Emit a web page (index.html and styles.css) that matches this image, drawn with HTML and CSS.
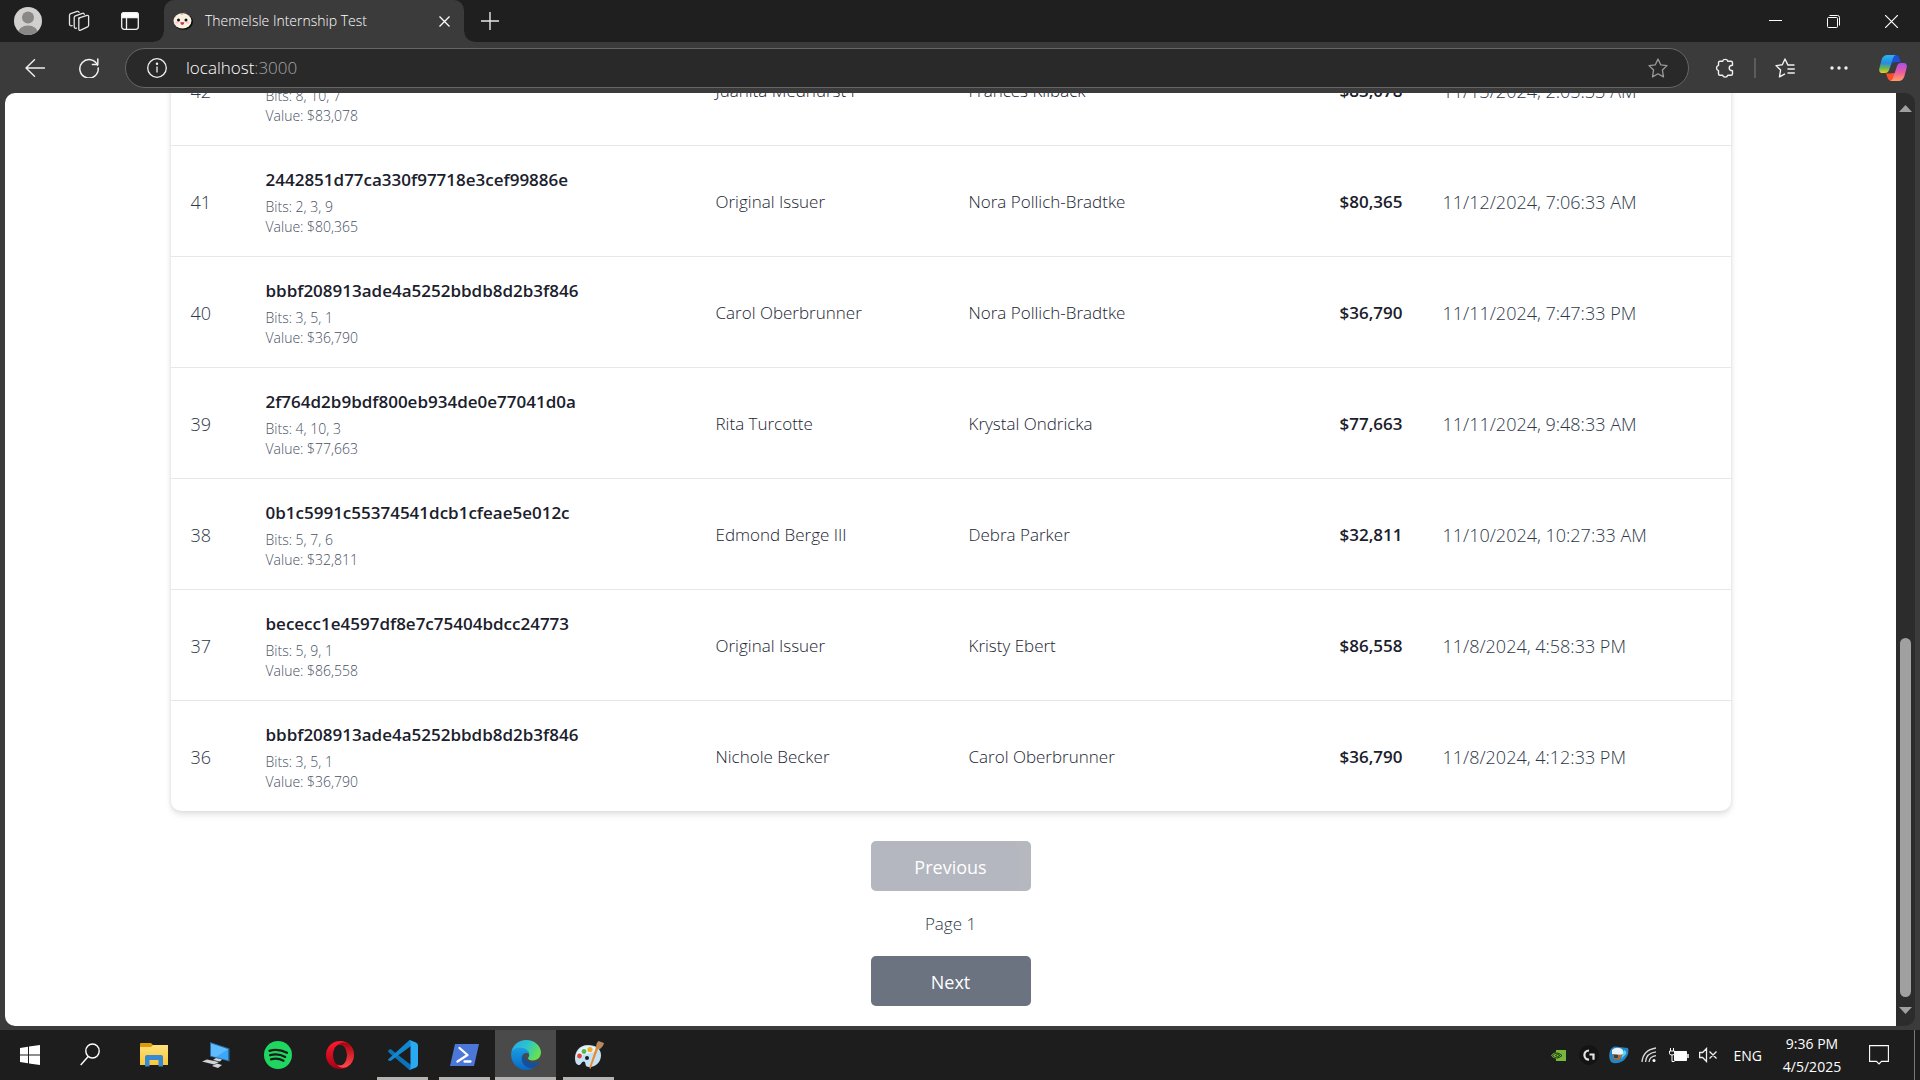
FILE: index.html
```html
<!DOCTYPE html>
<html lang="en">
<head>
<meta charset="utf-8">
<title>ThemeIsle Internship Test</title>
<link rel="stylesheet" href="styles.css">
</head>
<body>
<header class="tabstrip">
  <div class="strip-tools">
    <button class="strip-btn" aria-label="Profile">
      <svg width="28" height="28" viewBox="0 0 28 28"><defs><clipPath id="face"><circle cx="14" cy="14" r="14"/></clipPath></defs><g clip-path="url(#face)"><rect width="28" height="28" fill="#d2d0ce"/><circle cx="14" cy="10.5" r="6" fill="#8a8886"/><ellipse cx="14" cy="26" rx="10" ry="7.5" fill="#8a8886"/></g></svg>
    </button>
    <button class="strip-btn" aria-label="Workspaces">
      <svg width="22" height="22" viewBox="0 0 22 22" fill="none" stroke="#e6e6e6" stroke-width="1.3" stroke-linejoin="round" stroke-linecap="round"><path d="M10.5 8.2 19 5.4q1.6-.4 1.6 1.2v8.6q0 1.200-1 1.600l-7 3.400q-1.800.7-1.800-1.200V9.500q0-1 .900-1.300z"/><path d="M8.500 18.200q-2.300.6-2.300-1.700V7.500q0-1.300 1.200-1.700l7-2.500q1.500-.4 1.900 1"/><path d="M4.200 15.700q-2.700.5-2.700-1.700V5.400q0-1.300 1.200-1.700l6.500-2.300q1.500-.4 1.900 1"/></svg>
    </button>
    <button class="strip-btn" aria-label="Tab actions">
      <svg width="18" height="18" viewBox="0 0 18 18" fill="none" stroke="#f0f0f0" stroke-width="1.3"><rect x=".7" y=".7" width="16.600" height="16.600" rx="2.500"/><path d="M.7 5.500V3Q.7.7 3 .7h12q2.300 0 2.300 2.300v2.500z" fill="#fff"/><path d="M5.500 5.500v11.800"/></svg>
    </button>
  </div>
  <div class="tab">
    <svg class="tab-icon" width="20" height="18" viewBox="0 0 20 18"><ellipse cx="10.500" cy="9.800" rx="9.500" ry="8" fill="#0b0b0b"/><ellipse cx="9.500" cy="8.800" rx="9" ry="7.600" fill="#fbf0df"/><path d="M8 2.500q2.500 0 3-1.800" stroke="#c9b59a" fill="none"/><circle cx="5.500" cy="8" r="1.500" fill="#111"/><circle cx="13" cy="8" r="1.500" fill="#111"/><ellipse cx="3.800" cy="10.500" rx="1.500" ry=".9" fill="#febbd0"/><ellipse cx="14.700" cy="10.500" rx="1.500" ry=".9" fill="#febbd0"/><path d="M7.200 10.300h4.200q-.4 2.600-2.100 2.600t-2.100-2.600z" fill="#c6303f"/></svg>
    <span class="tab-title">ThemeIsle Internship Test</span>
    <button class="tab-close" aria-label="Close tab"><svg width="11" height="11" viewBox="0 0 11 11" stroke="#fff" stroke-width="1.300"><path d="m.5.5 10 10m0-10-10 10"/></svg></button>
  </div>
  <button class="new-tab" aria-label="New tab"><svg width="18" height="18" viewBox="0 0 18 18" stroke="#e8e8e8" stroke-width="1.400"><path d="M9 0v18M0 9h18"/></svg></button>
  <div class="window-controls">
    <button class="win-btn" aria-label="Minimize"><svg width="13" height="13" viewBox="0 0 13 13" stroke="#fff"><path d="M0 5.500h13"/></svg></button>
    <button class="win-btn" aria-label="Restore"><svg width="13" height="13" viewBox="0 0 13 13" fill="none" stroke="#fff"><rect x=".5" y="2.500" width="10" height="10" rx="1"/><path d="M2.500.5h8q2 0 2 2v8"/></svg></button>
    <button class="win-btn" aria-label="Close"><svg width="13" height="13" viewBox="0 0 13 13" stroke="#fff" stroke-width="1.200"><path d="m0 0 13 13M13 0 0 13"/></svg></button>
  </div>
</header>

<nav class="toolbar" aria-label="Browser">
  <button class="tool-btn" aria-label="Back"><svg width="20" height="18" viewBox="0 0 20 18" fill="none" stroke="#f0f0f0" stroke-width="1.400" stroke-linecap="round" stroke-linejoin="round"><path d="M9.500.7 1 9l8.500 8.300M1 9h18.500"/></svg></button>
  <button class="tool-btn" aria-label="Refresh"><svg width="20" height="20" viewBox="0 0 20 20" fill="none" stroke="#f0f0f0" stroke-width="1.500" stroke-linecap="round" stroke-linejoin="round"><path d="M18.500 7.200A9.200 9.200 0 1 0 19.200 10"/><path d="M18.800 1v5.400h-5.400"/></svg></button>
  <div class="address">
    <svg width="20" height="20" viewBox="0 0 20 20" fill="none" stroke="#f0f0f0" stroke-width="1.300"><circle cx="10" cy="10" r="9.300"/><path d="M10 8.500v6"/><circle cx="10" cy="5.800" r=".6" fill="#fff"/></svg>
    <span class="url">localhost<span class="port">:3000</span></span>
    <button class="favorite" aria-label="Add to favorites"><svg width="20" height="20" viewBox="0 0 20 20" fill="none" stroke="#9a9a9a" stroke-width="1.300" stroke-linejoin="round"><path d="m10 1 2.700 5.800 6.300.8-4.600 4.400 1.100 6.900L10 15.800 4.500 18.900 5.600 12 1 7.600l6.300-.8z"/></svg></button>
  </div>
  <button class="tool-btn" aria-label="Extensions"><svg width="20" height="20" viewBox="0 0 20 20" fill="none" stroke="#f0f0f0" stroke-width="1.400" stroke-linejoin="round"><path d="M5 3.300h2.600a2.700 2.700 0 0 1 5.200 0h3.200q1.500 0 1.500 1.500v2.400q-3.300.2-3.300 2.800t3.300 2.800v2.900q0 1.500-1.500 1.500h-3.200a2.700 2.700 0 0 1-5.200 0H5q-1.500 0-1.500-1.500v-3.100a2.700 2.700 0 0 1 0-5.200V4.800q0-1.500 1.500-1.500z"/></svg></button>
  <span class="divider"></span>
  <button class="tool-btn" aria-label="Favorites"><svg width="20" height="20" viewBox="0 0 20 20" fill="none" stroke="#f0f0f0" stroke-width="1.400" stroke-linejoin="round" stroke-linecap="round"><path d="M12.800 6.900 10 1 7.300 6.800 1 7.600 5.600 12 4.500 18.900l5-2.800M13 11H19.300M13 15H19.300M12.800 7H19"/></svg></button>
  <button class="tool-btn" aria-label="Settings and more"><svg width="18" height="4" viewBox="0 0 18 4" fill="#f0f0f0"><circle cx="2" cy="2" r="1.700"/><circle cx="9" cy="2" r="1.700"/><circle cx="16" cy="2" r="1.700"/></svg></button>
  <button class="tool-btn" aria-label="Copilot"><svg width="28" height="26" viewBox="0 0 28 26"><defs><linearGradient id="cpA" x1="0" y1="0" x2="0" y2="1"><stop offset="0" stop-color="#28b5f4"/><stop offset=".45" stop-color="#2a8bdc"/><stop offset=".75" stop-color="#6cba4a"/><stop offset="1" stop-color="#f2cf1c"/></linearGradient><linearGradient id="cpB" x1="0" y1="0" x2="0" y2="1"><stop offset="0" stop-color="#a450f0"/><stop offset=".5" stop-color="#ec5aa0"/><stop offset="1" stop-color="#ffa060"/></linearGradient></defs><path d="M8 0h9q2.500 0 3.300 2.800L21.500 7H17l-4 1-3 8z" fill="#1c50d8"/><path d="M8.500 0H17q-2 0-3 3l-4 12q-1 3-4 3H3.500Q-.5 18 .3 13.500L2.500 5Q4 0 8.500 0z" fill="url(#cpA)"/><path d="M7 18.500h4l5-.5 2-2-2 8-1.500 2H12q-2.500 0-3.300-2.800z" fill="#f8502c"/><path d="M19.500 26H11q2 0 3-3l4-12q1-3 4-3h2.500q4 0 3.200 4.500L25.500 21q-1.500 5-6 5z" fill="url(#cpB)"/></svg></button>
</nav>

<div class="window">
  <div class="viewport">
    <main class="page">
      <div class="card">
        <table class="sales">
          <colgroup><col class="c-id"><col class="c-hash"><col class="c-from"><col class="c-to"><col class="c-amount"><col class="c-date"></colgroup>
          <tbody>
            <tr><td class="id">42</td><td><strong class="hash">&nbsp;</strong><span class="meta">Bits: 8, 10, 7</span><span class="meta">Value: $83,078</span></td><td>Juanita Medhurst I</td><td>Frances Kilback</td><td class="amount">$83,078</td><td class="date">11/13/2024, 2:05:33 AM</td></tr>
            <tr><td class="id">41</td><td><strong class="hash">2442851d77ca330f97718e3cef99886e</strong><span class="meta">Bits: 2, 3, 9</span><span class="meta">Value: $80,365</span></td><td>Original Issuer</td><td>Nora Pollich-Bradtke</td><td class="amount">$80,365</td><td class="date">11/12/2024, 7:06:33 AM</td></tr>
            <tr><td class="id">40</td><td><strong class="hash">bbbf208913ade4a5252bbdb8d2b3f846</strong><span class="meta">Bits: 3, 5, 1</span><span class="meta">Value: $36,790</span></td><td>Carol Oberbrunner</td><td>Nora Pollich-Bradtke</td><td class="amount">$36,790</td><td class="date">11/11/2024, 7:47:33 PM</td></tr>
            <tr><td class="id">39</td><td><strong class="hash">2f764d2b9bdf800eb934de0e77041d0a</strong><span class="meta">Bits: 4, 10, 3</span><span class="meta">Value: $77,663</span></td><td>Rita Turcotte</td><td>Krystal Ondricka</td><td class="amount">$77,663</td><td class="date">11/11/2024, 9:48:33 AM</td></tr>
            <tr><td class="id">38</td><td><strong class="hash">0b1c5991c55374541dcb1cfeae5e012c</strong><span class="meta">Bits: 5, 7, 6</span><span class="meta">Value: $32,811</span></td><td>Edmond Berge III</td><td>Debra Parker</td><td class="amount">$32,811</td><td class="date">11/10/2024, 10:27:33 AM</td></tr>
            <tr><td class="id">37</td><td><strong class="hash">bececc1e4597df8e7c75404bdcc24773</strong><span class="meta">Bits: 5, 9, 1</span><span class="meta">Value: $86,558</span></td><td>Original Issuer</td><td>Kristy Ebert</td><td class="amount">$86,558</td><td class="date">11/8/2024, 4:58:33 PM</td></tr>
            <tr><td class="id">36</td><td><strong class="hash">bbbf208913ade4a5252bbdb8d2b3f846</strong><span class="meta">Bits: 3, 5, 1</span><span class="meta">Value: $36,790</span></td><td>Nichole Becker</td><td>Carol Oberbrunner</td><td class="amount">$36,790</td><td class="date">11/8/2024, 4:12:33 PM</td></tr>
          </tbody>
        </table>
      </div>
      <div class="pagination">
        <button class="page-btn" disabled>Previous</button>
        <span class="page-label">Page 1</span>
        <button class="page-btn">Next</button>
      </div>
    </main>
    <div class="scrollbar" aria-hidden="true">
      <svg width="13" height="7" viewBox="0 0 13 7"><path d="M6.500 0 13 7H0z" fill="#a0a0a0"/></svg>
      <div class="track"><div class="thumb"></div></div>
      <svg width="13" height="7" viewBox="0 0 13 7"><path d="M6.500 7 13 0H0z" fill="#a0a0a0"/></svg>
    </div>
  </div>
</div>

<footer class="taskbar">
  <button class="task sys" aria-label="Start"><svg width="20" height="20" viewBox="0 0 20 20" fill="#fff"><path d="M0 3l8-1.200v7.700H0zM9 1.600 20 0v9.500H9zM0 10.500h8v7.700L0 17zM9 10.500h11V20L9 18.400z"/></svg></button>
  <button class="task sys" aria-label="Search"><svg width="20" height="24" viewBox="0 0 20 24" fill="none" stroke="#fff" stroke-width="1.400"><ellipse cx="12.500" cy="8" rx="6.700" ry="7"/><path d="M8.200 13.500.7 22"/></svg></button>
  <button class="task first" aria-label="File Explorer"><svg width="28" height="24" viewBox="0 0 28 24"><defs><linearGradient id="fe" x1="0" y1="0" x2="0" y2="1"><stop offset="0" stop-color="#ffe07a"/><stop offset="1" stop-color="#fac738"/></linearGradient></defs><path d="M0 1q0-1 1-1h10l2 2h14q1 0 1 1v10H0z" fill="#dd9b05"/><path d="M0 4h11l2-2h15v20H0z" fill="url(#fe)"/><path d="M5 23.500V14q0-2 2-2h14q2 0 2 2v9.500h-4.500V17h-9v6.500z" fill="#3689d3"/></svg></button>
  <button class="task" aria-label="This PC"><svg width="28" height="26" viewBox="0 0 28 26"><path d="m8 0 19.500 6.500v13L8 14.500z" fill="#2f6c9c"/><path d="m9 1.500 17 5.800v11L9 13.700z" fill="#3ba7f8"/><path d="m9 1.500 17 5.800-12 7.700-5-1.300z" fill="#5fbcff"/><path d="m0 19.500 5-2 12 2.500-5 2.500zM10 24l5-2.500 5 1.500-4 3zM14 16l6 1.500-2 2-7-1.500z" fill="#cfd3da"/></svg></button>
  <button class="task" aria-label="Spotify"><svg width="28" height="28" viewBox="0 0 28 28"><circle cx="14" cy="14" r="14" fill="#1fd760"/><path d="M5.500 9.800q9-2.500 17.500 2M6.200 14.200q7.800-2.200 15 1.700M7 18.300q6.800-1.700 12.500 1.500" fill="none" stroke="#1b1b1b" stroke-width="2.300" stroke-linecap="round"/></svg></button>
  <button class="task" aria-label="Opera"><svg width="28" height="28" viewBox="0 0 28 28"><defs><linearGradient id="op" x1="0" y1="0" x2="0" y2="1"><stop offset="0" stop-color="#ff1b2d"/><stop offset="1" stop-color="#a70014"/></linearGradient><linearGradient id="op2" x1="0" y1="0" x2="0" y2="1"><stop offset="0" stop-color="#a80010"/><stop offset="1" stop-color="#ff4b4b"/></linearGradient></defs><path fill-rule="evenodd" d="M14 0a14 14 0 1 0 0 28 14 14 0 0 0 0-28zm0 3.500c4 0 7 4.700 7 10.500s-3 10.500-7 10.500S7 19.800 7 14s3-10.500 7-10.500z" fill="url(#op)"/><path d="M11 4.500C14 .5 20 .5 23.300 3.600A14 14 0 0 1 23 24.600c-4 3.200-9 3-12-1.100 5 3 10-1.500 10-9.500S16 1.500 11 4.500z" fill="url(#op2)"/></svg></button>
  <button class="task open" aria-label="Visual Studio Code"><svg width="30" height="30" viewBox="0 0 30 30"><path d="M0 10.500 2.500 9 23 25v4.500L21.500 30 .3 12z" fill="#0b73b8"/><path d="M0 19.500 21.500 0l1.500.5V6L2.500 21 .3 20.500z" fill="#1286cf"/><path d="M21.500 0 28 2.500q2 .8 2 3v19q0 2.200-2 3L21.500 30q1-.5 1-2V2q0-1.500-1-2z" fill="#29a9f2"/></svg></button>
  <button class="task open" aria-label="PowerShell"><svg width="29" height="22" viewBox="0 0 29 22"><path d="M5 0h24l-5 22H0z" fill="#4b78d8"/><path d="m9.500 4 8 7-10 6.500M14.500 17.500h6" fill="none" stroke="#fff" stroke-width="2.300" stroke-linecap="round" stroke-linejoin="round"/></svg></button>
  <button class="task open active" aria-label="Microsoft Edge"><svg width="30" height="30" viewBox="0 0 30 30"><defs><linearGradient id="ed" x1="0" y1="0" x2="1" y2=".4"><stop offset="0" stop-color="#2aa5e8"/><stop offset=".55" stop-color="#2cc4cf"/><stop offset="1" stop-color="#63e055"/></linearGradient><linearGradient id="ed2" x1="0" y1="0" x2="0" y2="1"><stop offset="0" stop-color="#1b9de2"/><stop offset="1" stop-color="#0669c8"/></linearGradient></defs><path d="M.3 12.500C1.500 5 7.500 0 15 0c9 0 15 6.200 15 12.500 0 5-4 8-8.500 8-3 0-4.500-1-4.500-2.200 0-.8 1.200-1.300 1.200-3.600 0-3.500-4-6.200-8-6.200-5 0-9 2-9.900 4z" fill="url(#ed)"/><path d="M.2 13C1 9.500 5 7.800 9.500 7.800c5 0 8.700 3 8.700 6.700-2-3-7.500-1-7.500 4 0 6 5 10 11 9.700C19 29.700 17 30 15 30 6 30-.8 22 .2 13z" fill="url(#ed2)"/><path d="M12.500 14.500c-4 7 2 14.500 9 13.800 3-1.300 5.500-3.800 6.500-5.800.3-.7-.2-1-.9-.6-6 2.800-12.600.1-14.600-7.400z" fill="#1450a0"/></svg></button>
  <button class="task open" aria-label="Paint"><svg width="30" height="28" viewBox="0 0 30 28"><path d="M14 4C5 4 1 11 1 17c0 5 2 7 4 7s3-4 5-3.500c2.500.5 0 5.500 5 5.500 8 0 12-6 12-12S22 4 14 4z" fill="#c5e2f3"/><path d="M14 5C7 5 3 10 2 15q11-1 23-6Q21 5 14 5z" fill="#e6f4fb"/><circle cx="5.500" cy="15" r="2.400" fill="#e0453c"/><circle cx="10" cy="10.500" r="2.400" fill="#58b947"/><circle cx="16" cy="8.500" r="2.600" fill="#f5ac28"/><circle cx="13" cy="17" r="2" fill="#17202a"/><path d="m22 6 2.500 1-8 21q-1.500-.5-1-2z" fill="#ea8b32"/><path d="M22 7q0-5 2.500-7l5.500 2q-1 4-5 6.500z" fill="#b98a5c"/></svg></button>

  <div class="tray">
    <span class="tray-item"><svg width="15" height="11" viewBox="0 0 15 11"><path d="M5 0h10v11H5z" fill="#76b93a"/><path d="M0 5.500Q5-1 12 5.500 5 12 0 5.500z" fill="#76b93a"/><path d="M1.500 5.500Q6 .5 11 5.500 6 10.500 1.500 5.500zM4.500 5.500Q6.500 3 9 5.500 6.500 8 4.500 5.500z" fill="none" stroke="#1d2a12" stroke-width=".9"/></svg></span>
    <span class="tray-item"><svg width="20" height="20" viewBox="0 0 20 20"><circle cx="10" cy="10" r="10" fill="#141414"/><path d="M10 5.500a4.600 4.600 0 0 0 0 9.200M10.500 9.500h4v5.200" fill="none" stroke="#e6e6e6" stroke-width="2.200"/></svg></span>
    <span class="tray-item"><svg width="20" height="18" viewBox="0 0 20 18"><path d="M1 5Q3-1 10 1l9 1q2 7-5 13-7 4-12 1Q-1 12 1 5z" fill="#2285c4"/><path d="M3 4q4-4 10-1l3 5-6 1-7-1z" fill="#e8f4fa"/><path d="M4 8l9 1-3 5-6-1z" fill="#bb6a28"/><path d="M5 9h4v3H5z" fill="#25485c"/><path d="M15 4q3 1 2 4l-5 5z" fill="#62cdf0"/></svg></span>
    <span class="tray-item"><svg width="16" height="16" viewBox="0 0 16 16" fill="none" stroke="#d8d8d8" stroke-width="1.300"><path d="M1 15Q2 3 15 1M4.500 15Q5 6 15 4.800M8 15q.5-5.500 7-6.300"/><circle cx="13" cy="13.500" r="1.500" fill="#fff" stroke="none"/></svg></span>
    <span class="tray-item"><svg width="20" height="14" viewBox="0 0 20 14"><path d="M5.500 3.500h12v9h-12z" fill="#fff" stroke="#fff"/><path d="M19 6v4" stroke="#fff" stroke-width="1.500"/><path d="M.5 3h5v2.500q0 1.500-2.500 1.500T.5 5.500zM1.500 0v3M4.500 0v3M3 7v6.500h2.500" fill="#1e1c1c" stroke="#fff"/></svg></span>
    <span class="tray-item"><svg width="19" height="16" viewBox="0 0 19 16" fill="none" stroke="#f0f0f0" stroke-width="1.300"><path d="M.6 5.500h3L7.500 1.500v13l-3.900-4h-3zM10.500 4.500l7 7m0-7-7 7"/></svg></span>
    <span class="lang">ENG</span>
    <time class="clock"><span>9:36 PM</span><span>4/5/2025</span></time>
    <button class="notify" aria-label="Notifications"><svg width="20" height="20" viewBox="0 0 20 20" fill="none" stroke="#fff" stroke-width="1.100"><path d="M.6.6h18.800v15.800h-6.900L10 19l-2.500-2.600H.6z"/></svg></button>
    <span class="show-desktop"></span>
  </div>
</footer>
</body>
</html>
```
FILE: styles.css
```css
* { box-sizing: border-box; }

body {
  margin: 0;
  height: 100vh;
  display: flex;
  flex-direction: column;
  overflow: hidden;
  background: #3b3b3b;
  font-family: "Open Sans", "Noto Sans", sans-serif;
  font-weight: 300;
  font-size: 17px;
}

button {
  padding: 0;
  border: 0;
  background: none;
  color: inherit;
  font: inherit;
  display: flex;
  align-items: center;
  justify-content: center;
}

svg { display: block; flex: none; }

/* Tab strip */
.tabstrip { height: 42px; flex: none; display: flex; background: #1f1f1f; }
.strip-tools { display: flex; gap: 1px; padding: 0 9px 0 3px; }
.strip-btn { width: 50px; }
.tab {
  position: relative;
  width: 300px;
  display: flex;
  align-items: center;
  padding: 0 8px 0 9px;
  background: #3b3b3b;
  border-radius: 10px 10px 0 0;
  color: #fff;
}
.tab::before,
.tab::after {
  content: "";
  position: absolute;
  bottom: 0;
  width: 10px;
  height: 10px;
}
.tab::before { left: -10px; background: radial-gradient(circle at 0 0, #1f1f1f 9px, #3b3b3b 10px); }
.tab::after { right: -10px; background: radial-gradient(circle at 100% 0, #1f1f1f 9px, #3b3b3b 10px); }
.tab-title { flex: 1; padding-left: 12px; font-size: 14px; line-height: 20px; }
.tab-close { width: 24px; height: 24px; }
.new-tab { width: 52px; }
.window-controls { display: flex; margin-left: auto; }
.win-btn { width: 58px; }

/* Toolbar */
.toolbar { height: 51px; flex: none; display: flex; align-items: center; padding: 1px 0 0 8px; background: #3b3b3b; }
.tool-btn { width: 54px; height: 40px; }
.address {
  flex: 1;
  height: 40px;
  display: flex;
  align-items: center;
  margin: 0 9px;
  padding: 0 20px 0 21px;
  background: #292929;
  border: 1px solid #666;
  border-radius: 20px;
}
.url { flex: 1; padding-left: 19px; color: #fff; line-height: 24px; }
.port { color: #a6a6a6; }
.divider { width: 2px; height: 20px; margin: 0 2px; background: #5c5c5c; }

/* Page area */
.window { flex: 1; min-height: 0; display: flex; padding: 0 5px 4px; }
.viewport { flex: 1; display: flex; border-radius: 10px; overflow: hidden; background: #2c2c2c; }
.page {
  flex: 1;
  min-width: 0;
  display: flex;
  flex-direction: column;
  justify-content: flex-end;
  align-items: center;
  padding: 0 20px 20px;
  background: #fff;
  overflow: hidden;
}
.card {
  flex: none;
  width: 100%;
  max-width: 1560px;
  border-radius: 10px;
  box-shadow: 0 4px 6px rgba(0, 0, 0, .1), 0 0 4px rgba(0, 0, 0, .08);
  background: #fff;
}
.sales { width: 100%; table-layout: fixed; border-collapse: collapse; }
.c-id { width: 75px; }
.c-hash { width: 450px; }
.c-from, .c-to { width: 253px; }
.c-amount { width: 221px; }
td {
  padding: 21px 20px 19px;
  border-top: 1px solid #e5e7eb;
  color: #1a2433;
  font-size: 17px;
  line-height: 26px;
  vertical-align: middle;
}
.id, .date { color: #2d3748; font-size: 18px; white-space: nowrap; }
.hash { display: block; margin-bottom: 4px; color: #1a202c; font-weight: 600; }
.meta { display: block; color: #475063; font-size: 14px; line-height: 20px; }
.amount { color: #1a202c; font-weight: 600; text-align: right; }

.pagination { flex: none; display: flex; flex-direction: column; align-items: center; gap: 20px; padding-top: 30px; }
.page-btn {
  width: 160px;
  height: 50px;
  padding-top: 2px;
  border-radius: 5px;
  background: #6b7280;
  color: #fff;
  font-size: 18px;
  font-weight: 400;
}
.page-btn:disabled { opacity: .5; }
.page-label { color: #2d3748; line-height: 25px; }

.scrollbar { width: 19px; display: flex; flex-direction: column; align-items: center; padding: 12px 0; }
.track { flex: 1; width: 11px; display: flex; flex-direction: column; justify-content: flex-end; padding: 10px 0; }
.thumb { height: 41%; border-radius: 6px; background: #a0a0a0; }

/* Taskbar */
.taskbar { height: 50px; flex: none; display: flex; background: #1e1d1d; color: #fff; font-size: 14px; font-weight: 400; }
.task { width: 62px; border: solid transparent; border-width: 3px 0; }
.task.sys { width: 60px; }
.task.first { margin-left: 3px; }
.task.open { width: 51px; margin: 0 5px 0 6px; border-bottom-color: #b5b2b2; }
.task.active { width: 61px; margin: 0 1px 0 0; border-top: 0; padding-top: 3px; background: #4b4a4a; }
.tray { margin-left: auto; display: flex; align-items: center; }
.tray-item { width: 30px; display: flex; justify-content: center; }
.lang { padding: 0 13px 0 10px; }
.clock { width: 74px; display: flex; flex-direction: column; align-items: center; line-height: 23px; }
.notify { width: 20px; margin: 0 25px 0 20px; }
.show-desktop { align-self: stretch; width: 6px; border-left: 1px solid #777; }
```
